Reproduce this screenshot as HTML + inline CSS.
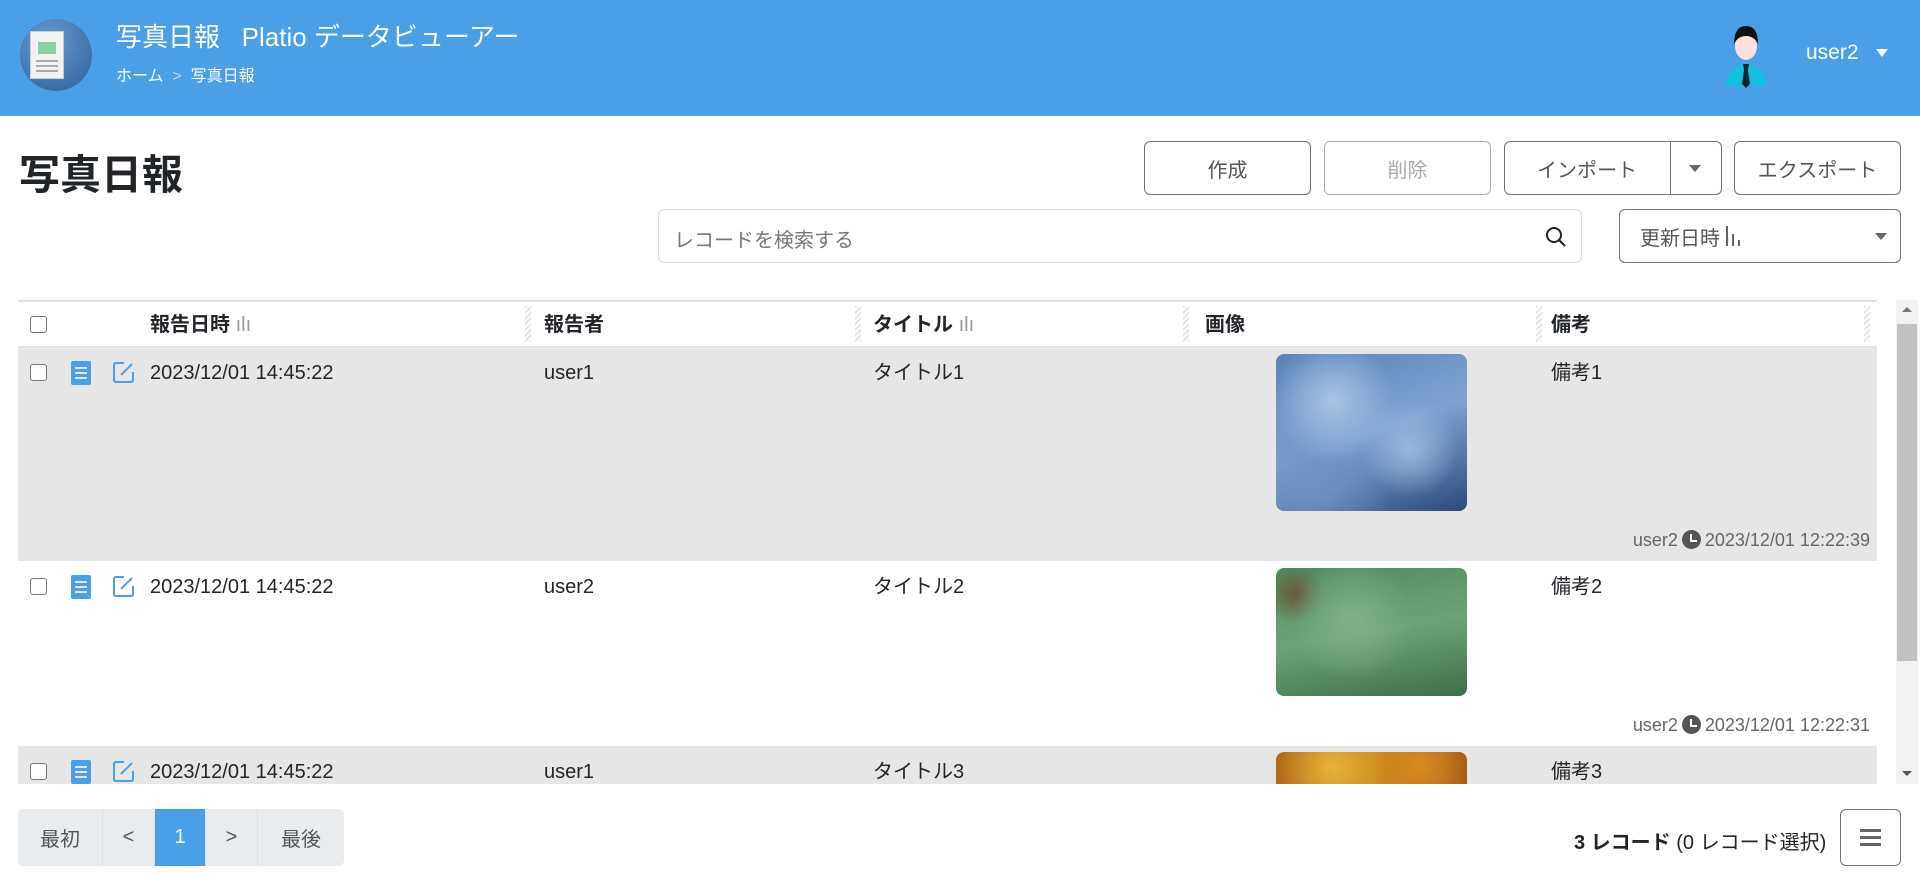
<!DOCTYPE html>
<html><head><meta charset="utf-8"><style>
*{box-sizing:border-box;margin:0;padding:0}
body{width:1920px;height:877px;overflow:hidden;background:#fff;font-family:"Liberation Sans","Noto Sans CJK JP",sans-serif;color:#212529;position:relative}
.a{position:absolute}
.hdr{left:0;top:0;width:1920px;height:116px;background:#4a9fe6}
.btn{position:absolute;border:1px solid #6c757d;border-radius:6px;height:54px;top:141px;display:flex;align-items:center;justify-content:center;font-size:20px;color:#555;background:#fff}
.row{position:absolute;left:18px;width:1859px}
.t{position:absolute;font-size:20px;white-space:nowrap;line-height:26px}
.cb{position:absolute;width:17px;height:17px;border:1.5px solid #777;border-radius:3px;background:#fff}
.doc{position:absolute;width:20px;height:24px;background:#4a9fe6;border-radius:2px}
.doc i{position:absolute;left:4px;width:12px;height:2px;background:#dbe9fb}
.meta{position:absolute;right:50px;font-size:18px;color:#666;white-space:nowrap;line-height:24px}
.clock{display:inline-block;width:19px;height:19px;border-radius:50%;background:#555;vertical-align:-3px;margin:0 4px;position:relative}
.clock:after{content:"";position:absolute;left:8px;top:4px;width:5px;height:6px;border-left:2px solid #fff;border-bottom:2px solid #fff}
.sep{position:absolute;top:306px;width:6px;height:36px;background:repeating-linear-gradient(135deg,#e4e4e4 0 2px,#fff 2px 4px)}
.pg{position:absolute;top:809px;height:57px;display:flex;align-items:center;justify-content:center;font-size:20px;color:#555;background:#e9ecef;border-right:1px solid #dcdfe3}
</style></head><body>
<div class="a hdr"></div>
<div class="a" style="left:20px;top:19px;width:72px;height:72px;border-radius:50%;background:radial-gradient(circle at 40% 30%,#6a9ad0,#2b5f99)"></div>
<div class="a" style="left:30px;top:31px;width:34px;height:48px;background:#f2f2f2;border:1px solid #ccc"></div>
<div class="a" style="left:38px;top:42px;width:18px;height:12px;background:#8ccfa0"></div>
<div class="a" style="left:36px;top:60px;width:22px;height:2px;background:#aaa;box-shadow:0 5px #aaa,0 10px #aaa"></div>
<div class="a" style="left:116px;top:17px;color:#fff;font-size:26px">写真日報&nbsp;&nbsp;&nbsp;Platio データビューアー</div>
<div class="a" style="left:116px;top:62px;color:#fff;font-size:16px">ホーム&nbsp;&nbsp;<span style="color:#bcd9f5">&gt;</span>&nbsp;&nbsp;写真日報</div>
<svg class="a" style="left:1722px;top:22px" width="48" height="66" viewBox="0 0 48 66"><path d="M4 64 Q6 46 20 42 L28 42 Q42 46 44 64Z" fill="#14c0e0"/><path d="M21 42 L27 42 L26 48 L28 62 L24 66 L20 62 L22 48Z" fill="#123"/><ellipse cx="24" cy="24" rx="11" ry="14" fill="#fde0dc"/><path d="M12 22 Q12 4 24 4 Q36 4 36 22 Q32 14 24 14 Q16 14 12 22Z" fill="#111"/></svg>
<div class="a" style="left:1806px;top:41px;color:#fff;font-size:21px">user2</div>
<div class="a" style="left:1876px;top:49px;width:0;height:0;border-left:6px solid transparent;border-right:6px solid transparent;border-top:8px solid #fff"></div>

<div class="a" style="left:19px;top:141px;font-size:41px;font-weight:bold">写真日報</div>
<div class="btn" style="left:1144px;width:167px">作成</div>
<div class="btn" style="left:1324px;width:167px;border-color:#aaa;color:#aaa">削除</div>
<div class="btn" style="left:1504px;width:218px;justify-content:flex-start;padding-left:32px">インポート</div>
<div class="a" style="left:1670px;top:141px;width:1px;height:54px;background:#6c757d"></div>
<div class="a" style="left:1689px;top:165px;border-left:6px solid transparent;border-right:6px solid transparent;border-top:7px solid #666"></div>
<div class="btn" style="left:1734px;width:167px">エクスポート</div>
<div class="a" style="left:658px;top:209px;width:924px;height:54px;border:1px solid #dcdcdc;border-radius:6px"></div>
<div class="a" style="left:674px;top:224px;font-size:20px;color:#777">レコードを検索する</div>
<svg class="a" style="left:1545px;top:226px" width="22" height="22" viewBox="0 0 22 22"><circle cx="9" cy="9" r="7" fill="none" stroke="#222" stroke-width="2"/><path d="M14 14 L20 20" stroke="#222" stroke-width="2"/></svg>
<div class="btn" style="left:1619px;top:209px;width:282px;justify-content:flex-start;padding-left:20px;border-radius:6px">更新日時 <span style="display:inline-block;width:16px;height:20px;margin-left:6px;background:linear-gradient(90deg,#666 0 2px,transparent 2px 6px,#666 6px 8px,transparent 8px 12px,#666 12px 14px,transparent 14px);clip-path:polygon(0 0,3px 0,3px 100%,6px 100%,6px 40%,9px 40%,9px 100%,12px 100%,12px 70%,16px 70%,16px 100%,0 100%)"></span></div>
<div class="a" style="left:1875px;top:233px;border-left:6px solid transparent;border-right:6px solid transparent;border-top:7px solid #666"></div>

<div class="a" style="left:18px;top:300px;width:1859px;height:2px;background:#e2e2e6"></div>
<div class="cb" style="left:30px;top:316px"></div>
<div class="t" style="left:150px;top:312px;font-weight:bold">報告日時 <span style="color:#999;font-weight:normal">ılı</span></div>
<div class="t" style="left:544px;top:312px;font-weight:bold">報告者</div>
<div class="t" style="left:873px;top:312px;font-weight:bold">タイトル <span style="color:#999;font-weight:normal">ılı</span></div>
<div class="t" style="left:1205px;top:312px;font-weight:bold">画像</div>
<div class="t" style="left:1551px;top:312px;font-weight:bold">備考</div>
<div class="sep" style="left:525px"></div><div class="sep" style="left:855px"></div><div class="sep" style="left:1183px"></div><div class="sep" style="left:1536px"></div><div class="sep" style="left:1864px"></div>
<div class="a" style="left:18px;top:346px;width:1859px;height:1px;background:#e2e2e6"></div>

<div class="row" style="top:347px;height:214px;background:#e6e6e6"></div>
<div class="row" style="top:746px;height:38px;background:#e6e6e6"></div>

<!-- row1 -->
<div class="cb" style="left:30px;top:364px"></div>
<div class="doc" style="left:71px;top:361px"><i style="top:6px"></i><i style="top:11px"></i><i style="top:16px"></i></div>
<svg class="a" style="left:112px;top:361px" width="23" height="23" viewBox="0 0 23 23"><path d="M12 2 H4 Q2 2 2 4 V19 Q2 21 4 21 H19 Q21 21 21 19 V11" fill="none" stroke="#4a9fe6" stroke-width="2"/><path d="M9 14 L20 3" stroke="#4a9fe6" stroke-width="2"/></svg>
<div class="t" style="left:150px;top:360px">2023/12/01 14:45:22</div>
<div class="t" style="left:544px;top:360px">user1</div>
<div class="t" style="left:873px;top:360px">タイトル1</div>
<div class="a" style="left:1276px;top:354px;width:191px;height:157px;border-radius:8px;background:radial-gradient(circle at 30% 30%,#a9c4e4 0,transparent 35%),radial-gradient(circle at 70% 60%,#9ab8dc 0,transparent 30%),radial-gradient(circle at 20% 80%,#6f93c4,transparent 40%),linear-gradient(160deg,#5b82b8,#7ea3d2 50%,#2c4a7a)"></div>
<div class="t" style="left:1551px;top:360px">備考1</div>
<div class="meta" style="top:528px">user2<span class="clock"></span>2023/12/01 12:22:39</div>

<!-- row2 -->
<div class="cb" style="left:30px;top:578px"></div>
<div class="doc" style="left:71px;top:575px"><i style="top:6px"></i><i style="top:11px"></i><i style="top:16px"></i></div>
<svg class="a" style="left:112px;top:575px" width="23" height="23" viewBox="0 0 23 23"><path d="M12 2 H4 Q2 2 2 4 V19 Q2 21 4 21 H19 Q21 21 21 19 V11" fill="none" stroke="#4a9fe6" stroke-width="2"/><path d="M9 14 L20 3" stroke="#4a9fe6" stroke-width="2"/></svg>
<div class="t" style="left:150px;top:574px">2023/12/01 14:45:22</div>
<div class="t" style="left:544px;top:574px">user2</div>
<div class="t" style="left:873px;top:574px">タイトル2</div>
<div class="a" style="left:1276px;top:568px;width:191px;height:128px;border-radius:8px;background:radial-gradient(circle at 40% 40%,#7fb08a,transparent 45%),radial-gradient(circle at 10% 20%,#6b5a3a,transparent 15%),linear-gradient(170deg,#4f8a5d,#6ea37a 50%,#3d6f4a)"></div>
<div class="t" style="left:1551px;top:574px">備考2</div>
<div class="meta" style="top:713px">user2<span class="clock"></span>2023/12/01 12:22:31</div>

<!-- row3 -->
<div class="cb" style="left:30px;top:763px"></div>
<div class="doc" style="left:71px;top:760px"><i style="top:6px"></i><i style="top:11px"></i><i style="top:16px"></i></div>
<svg class="a" style="left:112px;top:760px" width="23" height="23" viewBox="0 0 23 23"><path d="M12 2 H4 Q2 2 2 4 V19 Q2 21 4 21 H19 Q21 21 21 19 V11" fill="none" stroke="#4a9fe6" stroke-width="2"/><path d="M9 14 L20 3" stroke="#4a9fe6" stroke-width="2"/></svg>
<div class="t" style="left:150px;top:759px">2023/12/01 14:45:22</div>
<div class="t" style="left:544px;top:759px">user1</div>
<div class="t" style="left:873px;top:759px">タイトル3</div>
<div class="a" style="left:1276px;top:752px;width:191px;height:32px;border-radius:8px 8px 0 0;background:radial-gradient(circle at 30% 50%,#e7b43a,transparent 40%),radial-gradient(circle at 75% 40%,#d98a22,transparent 40%),linear-gradient(90deg,#b36a1a,#c98a1e,#9a5414)"></div>
<div class="t" style="left:1551px;top:759px">備考3</div>

<!-- scrollbar -->
<div class="a" style="left:1896px;top:300px;width:22px;height:484px;background:#f1f1f1"></div>
<div class="a" style="left:1897px;top:324px;width:20px;height:337px;background:#c1c1c1"></div>
<div class="a" style="left:1902px;top:307px;border-left:5px solid transparent;border-right:5px solid transparent;border-bottom:5px solid #777"></div>
<div class="a" style="left:1902px;top:771px;border-left:5px solid transparent;border-right:5px solid transparent;border-top:5px solid #555"></div>

<!-- footer -->
<div class="a" style="left:18px;top:809px;width:326px;height:57px;border:1px solid #dcdfe3;border-radius:6px;overflow:hidden;background:#e9ecef"></div>
<div class="pg" style="left:18px;width:85px;border-radius:6px 0 0 6px">最初</div>
<div class="pg" style="left:103px;width:52px">&lt;</div>
<div class="pg" style="left:155px;width:51px;background:#4a9fe6;color:#fff">1</div>
<div class="pg" style="left:206px;width:52px">&gt;</div>
<div class="pg" style="left:258px;width:86px;border-right:0;border-radius:0 6px 6px 0">最後</div>
<div class="a" style="left:1574px;top:826px;font-size:20px;white-space:nowrap"><b>3 レコード</b> (0 レコード選択)</div>
<div class="a" style="left:1840px;top:809px;width:61px;height:57px;border:1px solid #6c757d;border-radius:6px"></div>
<div class="a" style="left:1860px;top:829px;width:21px;height:3px;background:#666;box-shadow:0 7px #666,0 14px #666"></div>
</body></html>
